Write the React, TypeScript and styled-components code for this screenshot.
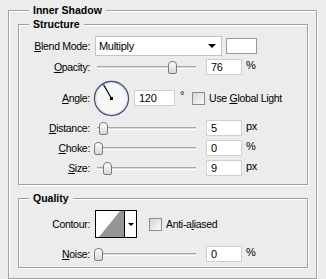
import React from "react";
import styled, { createGlobalStyle } from "styled-components";

const GlobalStyle = createGlobalStyle`
  html, body {
    margin: 0;
    padding: 0;
    background: #ececec;
    overflow: hidden;
  }
  body {
    font-family: "Liberation Sans", Arial, sans-serif;
    font-size: 10.5px;
    letter-spacing: -0.3px;
    color: #000;
  }
`;

const Page = styled.div`
  width: 326px;
  height: 279px;
  box-sizing: border-box;
  padding: 10px 0 0 8px;
  overflow: hidden;
`;

const Group = styled.div<{ $width: number; $ml?: number; $mt?: number }>`
  box-sizing: border-box;
  width: ${(p) => p.$width}px;
  margin-left: ${(p) => p.$ml || 0}px;
  margin-top: ${(p) => p.$mt || 0}px;
  border: 1px solid #a0a0a0;
  box-shadow: 1px 1px 0 #fff, inset 1px 1px 0 #fff;
`;

const Outer = styled(Group)`
  padding: 0 8px 10px 9px;
`;

const Legend = styled.div<{ $indent: number }>`
  width: max-content;
  height: 13px;
  margin: -7px 0 0 ${(p) => p.$indent}px;
  padding: 0 4px;
  background: #ececec;
  font-weight: bold;
  letter-spacing: 0;
  line-height: 13px;
`;

const Rows = styled.div<{ $pt: number; $pb: number }>`
  display: flex;
  flex-direction: column;
  padding: ${(p) => p.$pt}px 0 ${(p) => p.$pb}px;
`;

const Row = styled.div<{ $h: number; $mt?: number }>`
  display: flex;
  align-items: center;
  height: ${(p) => p.$h}px;
  margin-top: ${(p) => p.$mt || 0}px;
`;

const Label = styled.div`
  flex: none;
  width: 71px;
  margin-right: 5px;
  text-align: right;
  white-space: nowrap;
`;

const Key = styled.span`
  text-decoration: underline;
`;

const Select = styled.div`
  box-sizing: border-box;
  display: flex;
  align-items: center;
  justify-content: space-between;
  width: 127px;
  height: 20px;
  padding: 0 5px 0 3px;
  background: #fff;
  border: 1px solid #c4c4c4;
  font-size: 11px;
`;

const Arrow = styled.div<{ $w: number }>`
  width: 0;
  height: 0;
  border-left: ${(p) => p.$w}px solid transparent;
  border-right: ${(p) => p.$w}px solid transparent;
  border-top: ${(p) => p.$w}px solid #000;
`;

const Swatch = styled.div`
  box-sizing: border-box;
  width: 31px;
  height: 16px;
  margin-left: 4px;
  background: #fff;
  border: 1px solid #9a9a9a;
`;

const Slider = styled.div`
  position: relative;
  display: flex;
  align-items: center;
  width: 106px;
  height: 18px;
`;

const Track = styled.div`
  box-sizing: border-box;
  width: 99px;
  height: 3px;
  margin-left: 2px;
  border-top: 1px solid #a6a6a6;
  border-bottom: 1px solid #fff;
  background: #dadada;
`;

const Thumb = styled.div<{ $pos: number }>`
  position: absolute;
  top: 3px;
  left: ${(p) => p.$pos}px;
  box-sizing: border-box;
  width: 9px;
  height: 13px;
  border: 1px solid #7b7b7b;
  border-radius: 4px 4px 2px 2px;
  background: linear-gradient(#ffffff, #d6d6d6);
`;

const Field = styled.div<{ $w: number; $ml: number }>`
  box-sizing: border-box;
  display: flex;
  align-items: center;
  width: ${(p) => p.$w}px;
  height: 16px;
  margin-left: ${(p) => p.$ml}px;
  padding-left: 4px;
  background: #fff;
  border: 1px solid #cfcfcf;
  font-size: 11px;
`;

const Unit = styled.div`
  margin-left: 4px;
  margin-top: -4px;
  font-size: 11px;
`;

const Degree = styled.div`
  margin-left: 5px;
  margin-top: -6px;
  font-size: 11px;
`;

const Check = styled.div<{ $ml: number }>`
  box-sizing: border-box;
  width: 13px;
  height: 13px;
  margin-left: ${(p) => p.$ml}px;
  border: 1px solid #8c8c8c;
  background: linear-gradient(135deg, #d4d4d4, #fbfbfb);
`;

const CheckText = styled.div`
  margin-left: 4px;
  white-space: nowrap;
`;

const DialBox = styled.svg`
  flex: none;
  margin-left: -2px;
`;

const ContourBox = styled.div`
  box-sizing: border-box;
  display: flex;
  width: 42px;
  height: 28px;
  border: 1px solid #000;
  background: #fff;
`;

const ContourPreview = styled.svg`
  flex: none;
  border-right: 1px solid #000;
`;

const ContourArrow = styled.div`
  flex: 1;
  display: flex;
  align-items: center;
  justify-content: center;
`;

const SliderRow = ({
  label,
  keyChar,
  pos,
  value,
  unit,
  mt,
}: {
  label: string;
  keyChar: string;
  pos: number;
  value: string;
  unit: string;
  mt?: number;
}) => (
  <Row $h={18} $mt={mt}>
    <Label>
      <Key>{keyChar}</Key>
      {label}
    </Label>
    <Slider>
      <Track />
      <Thumb $pos={pos} />
    </Slider>
    <Field $w={36} $ml={5}>{value}</Field>
    <Unit>{unit}</Unit>
  </Row>
);

const Dial = ({ angle }: { angle: number }) => {
  const r = (angle * Math.PI) / 180;
  const cx = 18.5;
  const cy = 18.5;
  const x = cx + Math.cos(r) * 16;
  const y = cy - Math.sin(r) * 16;
  return (
    <DialBox width="37" height="37" viewBox="0 0 37 37">
      <circle cx={cx} cy={cy} r="17" fill="#f7f7f7" stroke="#45557a" strokeWidth="1.4" />
      <circle cx={cx} cy={cy} r="15.8" fill="none" stroke="#d4d8e2" strokeWidth="0.8" />
      <line x1={cx} y1={cy} x2={x} y2={y} stroke="#000" strokeWidth="1.1" />
      <rect x={cx - 1.5} y={cy - 1.5} width="3" height="3" fill="#000" />
    </DialBox>
  );
};

const App = () => {
  return (
    <Page>
      <GlobalStyle />
      <Outer $width={309}>
        <Legend $indent={11}>Inner Shadow</Legend>
        <Group $width={290} $mt={7}>
          <Legend $indent={10}>Structure</Legend>
          <Rows $pt={5} $pb={7}>
            <Row $h={20}>
              <Label>
                <Key>B</Key>lend Mode:
              </Label>
              <Select>
                <span>Multiply</span>
                <Arrow $w={4} />
              </Select>
              <Swatch />
            </Row>
            <SliderRow label="pacity:" keyChar="O" pos={73} value="76" unit="%" mt={2} />
            <Row $h={36} $mt={4}>
              <Label>
                <Key>A</Key>ngle:
              </Label>
              <Dial angle={120} />
              <Field $w={41} $ml={4}>120</Field>
              <Degree>°</Degree>
              <Check $ml={8} />
              <CheckText>
                Use <Key>G</Key>lobal Light
              </CheckText>
            </Row>
            <SliderRow label="istance:" keyChar="D" pos={4} value="5" unit="px" mt={3} />
            <SliderRow label="hoke:" keyChar="C" pos={-1} value="0" unit="%" mt={2} />
            <SliderRow label="ize:" keyChar="S" pos={8} value="9" unit="px" mt={2} />
          </Rows>
        </Group>
        <Group $width={290} $mt={13}>
          <Legend $indent={10}>Quality</Legend>
          <Rows $pt={5} $pb={4}>
            <Row $h={28}>
              <Label>Contour:</Label>
              <ContourBox>
                <ContourPreview width="28" height="26" viewBox="0 0 28 26">
                  <polygon points="3,26 24,0 28,0 28,26" fill="#969696" />
                </ContourPreview>
                <ContourArrow>
                  <Arrow $w={3} />
                </ContourArrow>
              </ContourBox>
              <Check $ml={12} />
              <CheckText>
                Anti-a<Key>l</Key>iased
              </CheckText>
            </Row>
            <SliderRow label="oise:" keyChar="N" pos={-1} value="0" unit="%" mt={7} />
          </Rows>
        </Group>
      </Outer>
    </Page>
  );
};

export default App;
